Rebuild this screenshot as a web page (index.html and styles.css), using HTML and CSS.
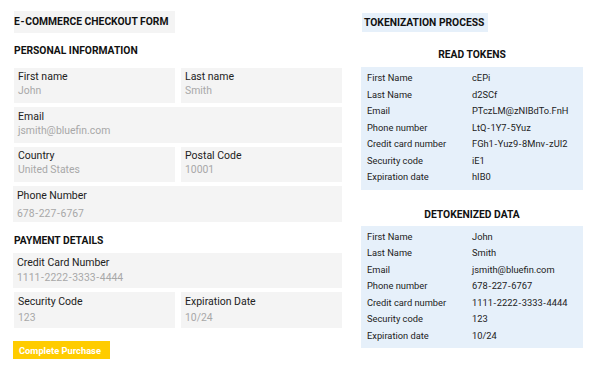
FILE: index.html
```html
<!DOCTYPE html>
<html>
<head>
<meta charset="utf-8">
<link rel="stylesheet" href="styles.css">
</head>
<body>
<div class="page">
  <div class="form-col">
    <div class="title-box">E<span class="dash">-</span>COMMERCE CHECKOUT FORM</div>
    <div class="section-title">PERSONAL INFORMATION</div>
    <div class="grid">
      <div class="field"><div class="label">First name</div><div class="value">John</div></div>
      <div class="field"><div class="label">Last name</div><div class="value">Smith</div></div>
      <div class="field wide"><div class="label">Email</div><div class="value">jsmith@bluefin.com</div></div>
      <div class="field"><div class="label">Country</div><div class="value">United States</div></div>
      <div class="field"><div class="label">Postal Code</div><div class="value">10001</div></div>
      <div class="field wide phone"><div class="label">Phone Number</div><div class="value">678<span class="dash">-</span>227<span class="dash">-</span>6767</div></div>
    </div>
    <div class="section-title pay">PAYMENT DETAILS</div>
    <div class="grid payment">
      <div class="field wide card"><div class="label">Credit Card Number</div><div class="value">1111<span class="dash">-</span>2222<span class="dash">-</span>3333<span class="dash">-</span>4444</div></div>
      <div class="field"><div class="label">Security Code</div><div class="value">123</div></div>
      <div class="field"><div class="label">Expiration Date</div><div class="value">10/24</div></div>
    </div>
    <button class="btn">Complete Purchase</button>
  </div>
  <div class="token-col">
    <div class="title-box blue">TOKENIZATION PROCESS</div>
    <div class="sub-title">READ TOKENS</div>
    <div class="table">
      <div class="row"><span class="k">First Name</span><span class="v">cEPi</span></div>
      <div class="row"><span class="k">Last Name</span><span class="v">d2SCf</span></div>
      <div class="row"><span class="k">Email</span><span class="v">PTczLM@zNIBdTo.FnH</span></div>
      <div class="row"><span class="k">Phone number</span><span class="v">LtQ<span class="dash">-</span>1Y7<span class="dash">-</span>5Yuz</span></div>
      <div class="row"><span class="k">Credit card number</span><span class="v">FGh1<span class="dash">-</span>Yuz9<span class="dash">-</span>8Mnv<span class="dash">-</span>zUI2</span></div>
      <div class="row"><span class="k">Security code</span><span class="v">iE1</span></div>
      <div class="row"><span class="k">Expiration date</span><span class="v">hIB0</span></div>
    </div>
    <div class="sub-title second">DETOKENIZED DATA</div>
    <div class="table">
      <div class="row"><span class="k">First Name</span><span class="v">John</span></div>
      <div class="row"><span class="k">Last Name</span><span class="v">Smith</span></div>
      <div class="row"><span class="k">Email</span><span class="v">jsmith@bluefin.com</span></div>
      <div class="row"><span class="k">Phone number</span><span class="v">678<span class="dash">-</span>227<span class="dash">-</span>6767</span></div>
      <div class="row"><span class="k">Credit card number</span><span class="v">1111<span class="dash">-</span>2222<span class="dash">-</span>3333<span class="dash">-</span>4444</span></div>
      <div class="row"><span class="k">Security code</span><span class="v">123</span></div>
      <div class="row"><span class="k">Expiration date</span><span class="v">10/24</span></div>
    </div>
  </div>
</div>
</body>
</html>
```
FILE: styles.css
```css
* { box-sizing: border-box; }
html, body { margin: 0; padding: 0; background: #fff; }
body { font-family: Roboto, "Liberation Sans", sans-serif; color: #222; }
.page {
  display: flex;
  gap: 19px;
  padding: 11px 0 0 14px;
}
.form-col { width: 328px; display: flex; flex-direction: column; }
.token-col { width: 222px; display: flex; flex-direction: column; padding-top: 2px; }
.dash { padding: 0 0.7px; }
.title-box {
  align-self: flex-start;
  width: 161px;
  height: 22px;
  line-height: 22px;
  background: #f4f4f4;
  font-size: 10.3px;
  font-weight: 700;
  color: #111;
}
.title-box.blue {
  width: 126px;
  height: 19px;
  line-height: 19px;
  background: #e6f0fa;
  padding-left: 2px;
  margin-left: 1px;
}
.section-title {
  font-size: 10.3px;
  font-weight: 700;
  color: #111;
  margin: 12px 0 10.5px;
  line-height: 12px;
}
.section-title.pay { margin: 13px 0 6px; }
.grid {
  display: grid;
  grid-template-columns: 161px 161px;
  column-gap: 6px;
  row-gap: 4px;
}
.field {
  background: #f4f4f4;
  height: 35.6px;
  padding: 2.5px 4px 0;
}
.field.wide { grid-column: 1 / 3; }
.field.phone, .field.card { margin-left: -1px; }
.label { font-size: 10.5px; line-height: 14px; color: #222; }
.value { font-size: 10.4px; line-height: 14px; color: #a8a8a8; }
.field.phone .value { margin-top: 4px; }
.payment .field { padding-top: 3px; }
.payment .value { margin-top: 1.5px; }
.btn {
  align-self: flex-start;
  margin: 13px 0 0 -1px;
  width: 97px;
  height: 18px;
  padding: 0 0 0 6px;
  border: 0;
  background: #ffcc00;
  color: #fff;
  font-family: Roboto, "Liberation Sans", sans-serif;
  font-size: 9.3px;
  font-weight: 700;
  text-align: left;
}
.sub-title {
  text-align: center;
  font-size: 10.3px;
  font-weight: 700;
  color: #111;
  margin: 17px 0 6px;
  line-height: 12px;
}
.sub-title.second { margin: 19px 0 5px; }
.table {
  background: #e6f0fa;
  padding: 3px 6px 4px;
}
.row {
  display: flex;
  height: 16.5px;
  line-height: 16.5px;
  font-size: 9.3px;
  color: #222;
}
.k { width: 105px; }
.v { flex: 1; }
```
